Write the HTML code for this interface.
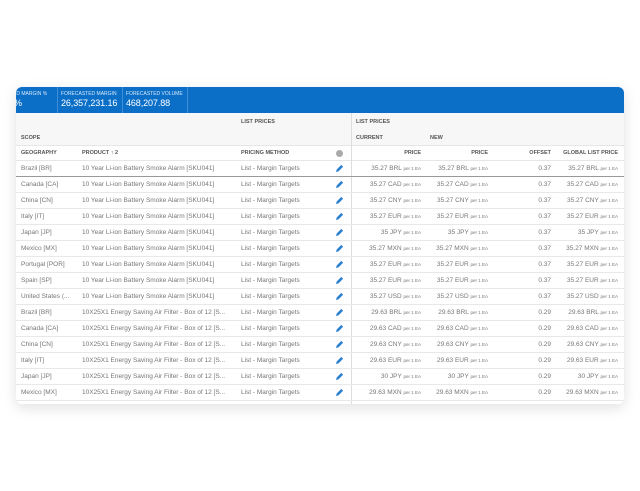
<!DOCTYPE html><html><head><style>
*{margin:0;padding:0;box-sizing:border-box}
body{width:640px;height:491px;background:#fff;font-family:"Liberation Sans",sans-serif;position:relative;overflow:hidden}
.card{position:absolute;left:16px;top:87px;width:608px;height:317px;background:#fff;border-radius:6px;box-shadow:0 4px 14px rgba(0,0,0,.12);overflow:hidden}
.bar{position:absolute;left:0;top:0;width:608px;height:26px;background:#0b6fc8}
.kp{position:absolute;top:0;height:26px;border-right:1px solid #3f8ed6;color:#fff}
.kp .l{position:absolute;top:4px;font-size:5px;left:3px;white-space:nowrap;color:#d8e8f8}
.kp .v{position:absolute;top:11px;font-size:9px;left:3px;white-space:nowrap;letter-spacing:-.1px}
.t{position:absolute;font-size:6.5px;color:#777;white-space:nowrap}
.h{position:absolute;font-size:5.5px;color:#555;font-weight:bold;white-space:nowrap}
.r{text-align:right}
.row{position:absolute;left:0;width:608px;height:16px;border-bottom:1px solid #e8e8e8}
.s{font-size:4.5px}
.pen{position:absolute;left:319px;width:9px;height:9px}
</style></head><body>
<div class="card">
<div class="bar">
<div class="kp" style="left:0;width:42px"><div class="l" style="left:-6px">TED MARGIN %</div><div class="v" style="left:-2px">%</div></div>
<div class="kp" style="left:42px;width:65px"><div class="l">FORECASTED MARGIN</div><div class="v">26,357,231.16</div></div>
<div class="kp" style="left:107px;width:65px"><div class="l">FORECASTED VOLUME</div><div class="v">468,207.88</div></div>
</div>
<div style="position:absolute;left:0;top:26px;width:608px;height:48px;background:#f7f7f7"></div>
<div style="position:absolute;left:0;top:58px;width:608px;height:16px;background:#fff;border-top:1px solid #e6e6e6;border-bottom:1px solid #e6e6e6"></div>
<div style="position:absolute;left:335px;top:26px;width:1px;height:291px;background:#ddd"></div>
<div class="h" style="left:225px;top:32px">LIST PRICES</div>
<div class="h" style="left:340px;top:32px">LIST PRICES</div>
<div class="h" style="left:5px;top:48px">SCOPE</div>
<div class="h" style="left:340px;top:48px">CURRENT</div>
<div class="h" style="left:414px;top:48px">NEW</div>
<div class="h" style="left:5px;top:63px">GEOGRAPHY</div>
<div class="h" style="left:66px;top:63px">PRODUCT ↑ 2</div>
<div class="h" style="left:225px;top:63px">PRICING METHOD</div>
<div style="position:absolute;left:320px;top:63px;width:7px;height:7px;border-radius:50%;background:#aaa"></div>
<div class="h r" style="left:340px;width:65px;top:63px">PRICE</div>
<div class="h r" style="left:410px;width:62px;top:63px">PRICE</div>
<div class="h r" style="left:475px;width:60px;top:63px">OFFSET</div>
<div class="h r" style="left:540px;width:62px;top:63px">GLOBAL LIST PRICE</div>
<div id="rows"></div>
</div>
<script>
var d=[["Brazil [BR]","BRL",0],["Canada [CA]","CAD",0],["China [CN]","CNY",0],["Italy [IT]","EUR",0],["Japan [JP]","JPY",0],["Mexico [MX]","MXN",0],["Portugal [POR]","EUR",0],["Spain [SP]","EUR",0],["United States (...","USD",0],["Brazil [BR]","BRL",1],["Canada [CA]","CAD",1],["China [CN]","CNY",1],["Italy [IT]","EUR",1],["Japan [JP]","JPY",1],["Mexico [MX]","MXN",1]];
var h="";d.forEach(function(r,i){var y=74+i*16;var p=r[2]?(r[1]=="JPY"?"30":"29.63"):(r[1]=="JPY"?"35":"35.27");var o=r[2]?"0.29":"0.37";
var pr=p+" "+r[1]+' <span class="s">per 1 EA</span>';
h+='<div class="row" style="top:'+y+'px;'+(i==0?'border-bottom:1px solid #999;':'')+'"></div>';
h+='<div class="t" style="left:5px;top:'+(y+4)+'px">'+r[0]+'</div>';
h+='<div class="t" style="left:66px;top:'+(y+4)+'px">'+(r[2]?"10X25X1 Energy Saving Air Filter - Box of 12 [S...":"10 Year Li-ion Battery Smoke Alarm [SKU041]")+'</div>';
h+='<div class="t" style="left:225px;top:'+(y+4)+'px">List - Margin Targets</div>';
h+='<svg class="pen" style="top:'+(y+3)+'px" viewBox="0 0 10 10"><path d="M1 9 L2 6 L7 1 L9 3 L4 8 Z" fill="#2b7fd0"/></svg>';
h+='<div class="t r" style="left:340px;width:65px;top:'+(y+4)+'px">'+pr+'</div>';
h+='<div class="t r" style="left:410px;width:62px;top:'+(y+4)+'px">'+pr+'</div>';
h+='<div class="t r" style="left:475px;width:60px;top:'+(y+4)+'px">'+o+'</div>';
h+='<div class="t r" style="left:540px;width:62px;top:'+(y+4)+'px">'+pr+'</div>';});
document.getElementById("rows").innerHTML=h;
</script>
</body></html>
